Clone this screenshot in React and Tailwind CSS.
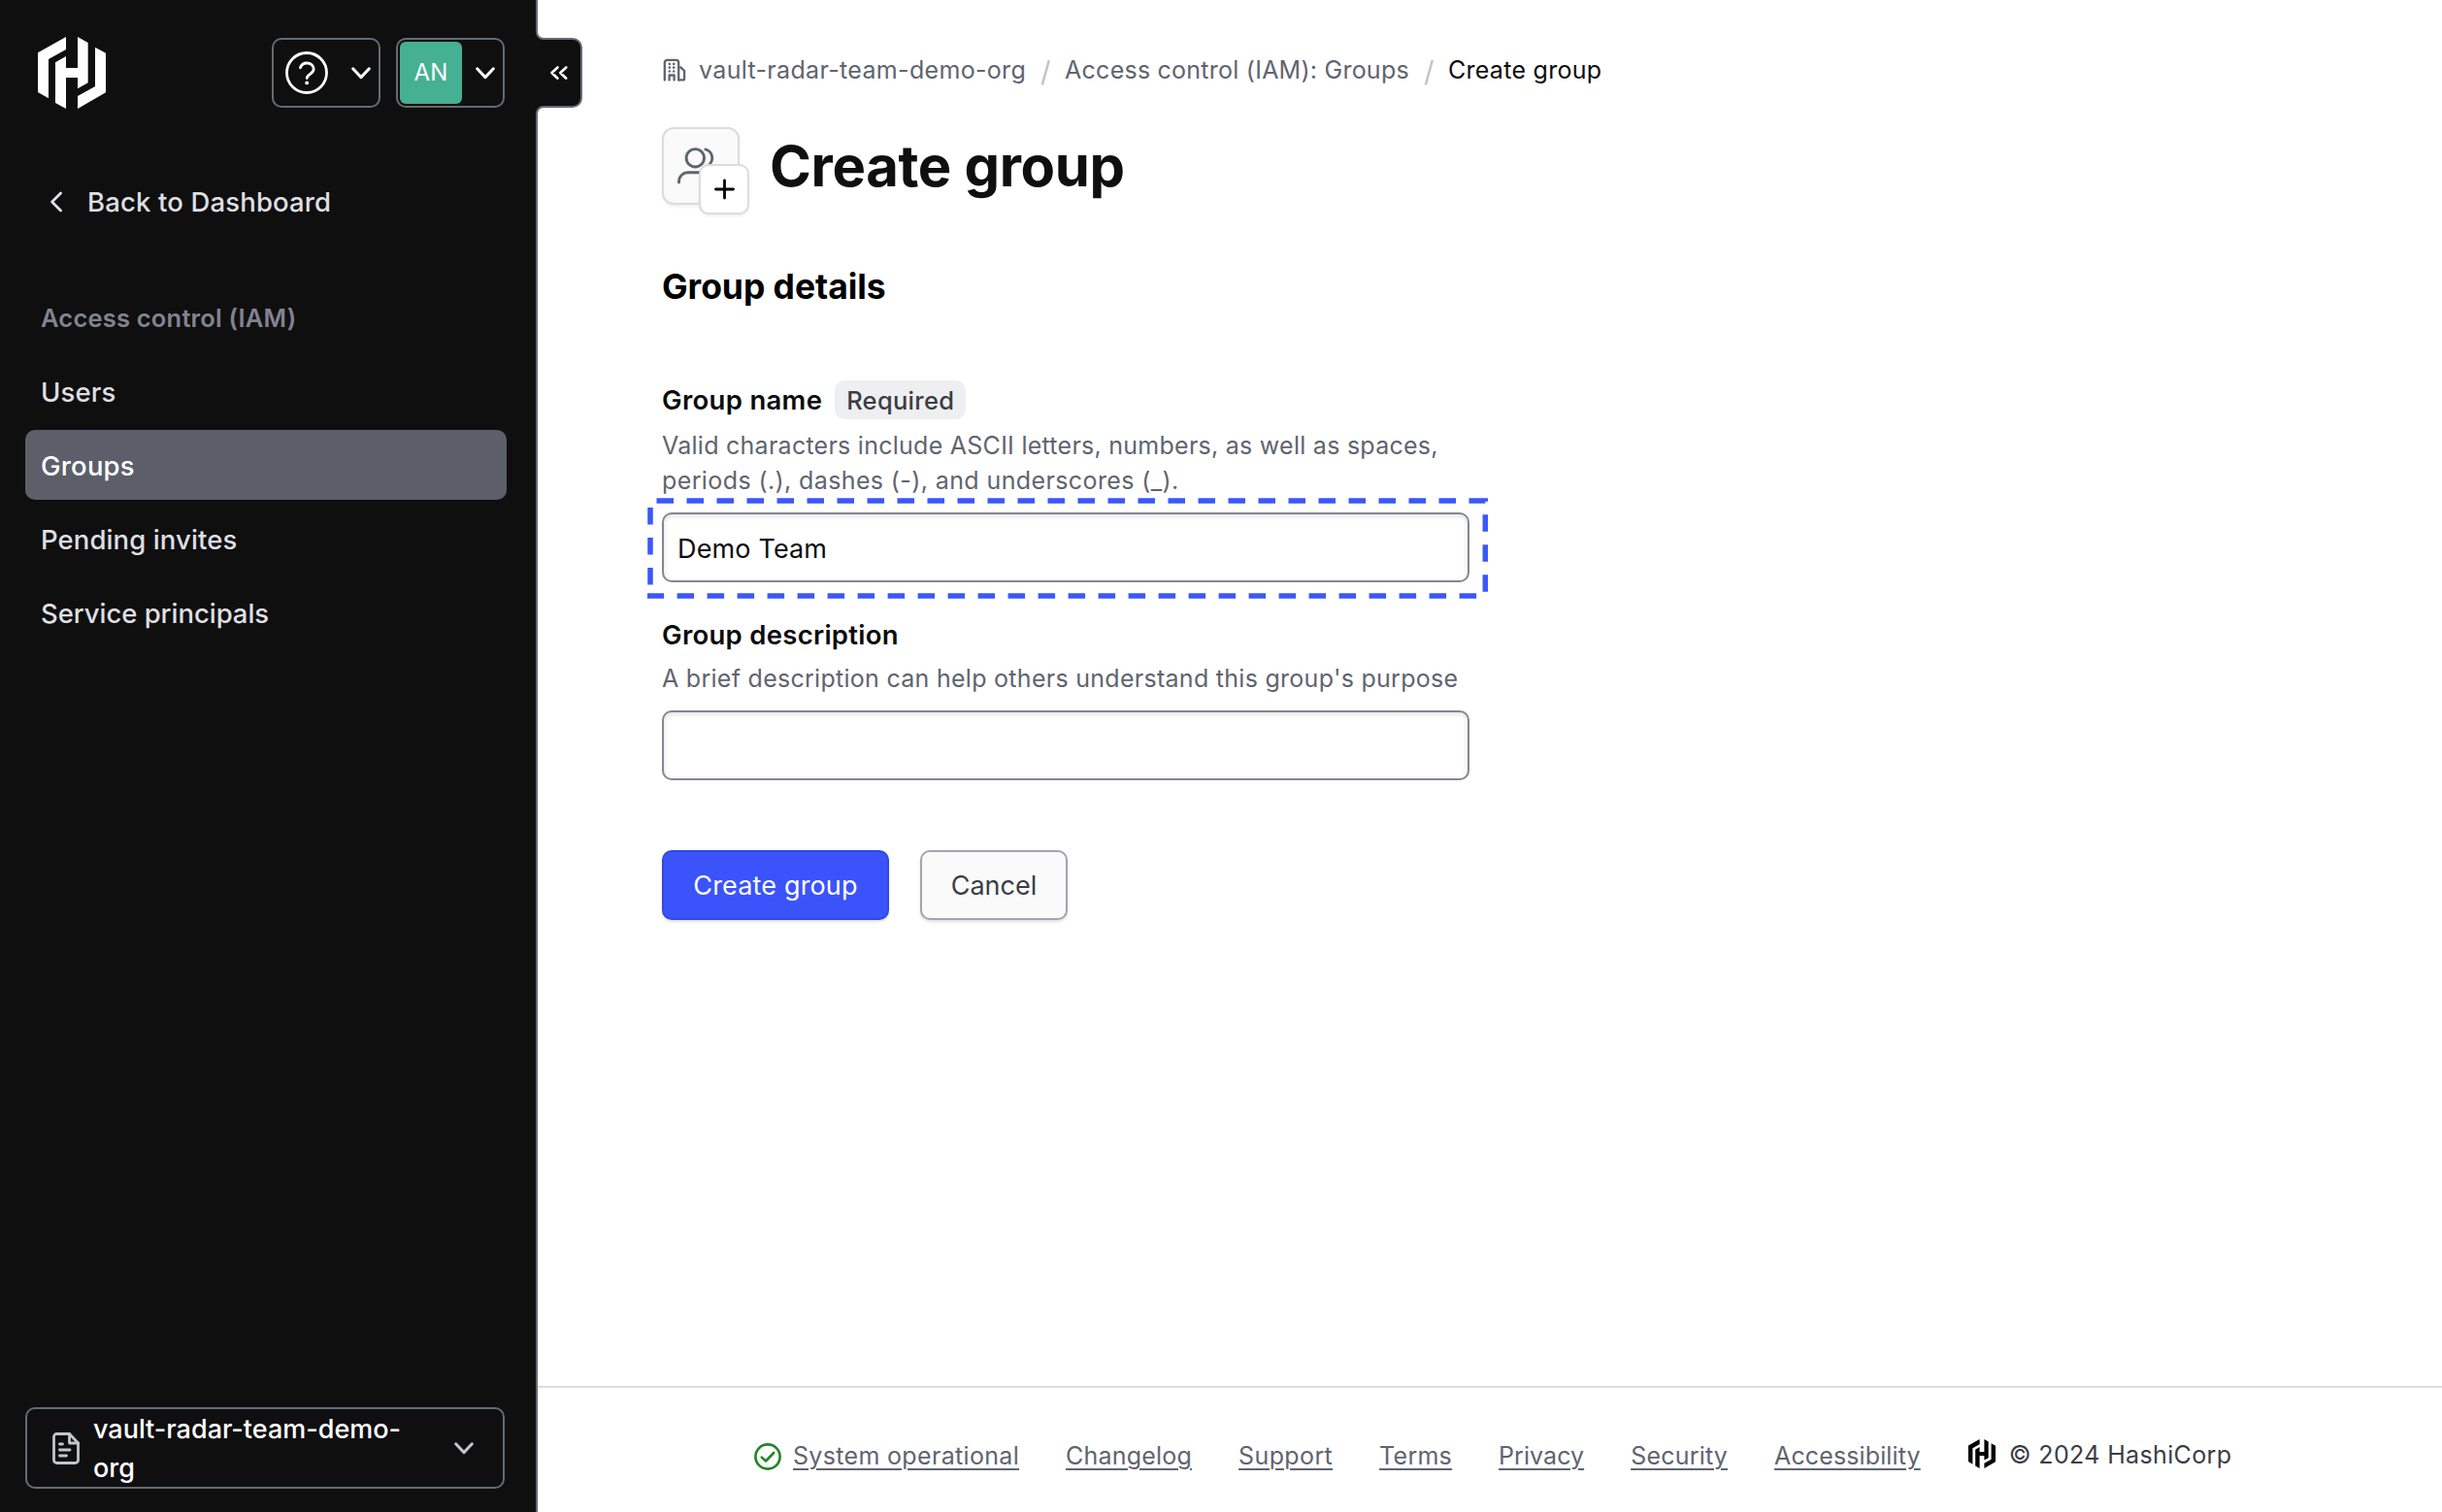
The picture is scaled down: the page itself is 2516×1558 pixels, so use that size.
import React from "react";

function HashiLogo({ className }) {
  return (
    <svg viewBox="57 39 210 222" preserveAspectRatio="none" fill="currentColor" className={className}>
      <path d="M57 88 144 39V78L90 108V229L57 210Z" />
      <path d="M111 118 144 99V135H180V39L212 57V181L180 199V165H144V261L111 243Z" />
      <path d="M234 71 267 89V211L180 261V222L234 192Z" />
    </svg>
  );
}

function Chevron({ className }) {
  return (
    <svg viewBox="0 0 20 13" fill="none" stroke="currentColor" strokeWidth="3" strokeLinecap="round" strokeLinejoin="round" className={className}>
      <path d="M1.7 1.8 10 10.6 18.3 1.8" />
    </svg>
  );
}

function HelpIcon() {
  return (
    <svg viewBox="0 0 44 44" fill="none" stroke="currentColor" strokeWidth="2.8" strokeLinecap="round" strokeLinejoin="round" className="h-11 w-11">
      <circle cx="22" cy="22" r="20.5" />
      <path d="M15.4 16.8A7 7 0 0 1 22.2 12c4 0 7 2.7 7 6.3 0 4.7-7 5.2-7 9.2" />
      <circle cx="22.2" cy="32.4" r="1.9" fill="currentColor" stroke="none" />
    </svg>
  );
}

function FileIcon() {
  return (
    <svg viewBox="0 0 28 33" fill="none" stroke="currentColor" strokeWidth="2.8" strokeLinecap="round" strokeLinejoin="round" className="h-[33px] w-[28px]">
      <path d="M17.5 1.5H4.5a3 3 0 0 0-3 3v24a3 3 0 0 0 3 3h19a3 3 0 0 0 3-3V11Z" />
      <path d="M17.5 1.5V11h9M7.500 12h3M7.500 18h10.500M7.500 24h7" />
    </svg>
  );
}

function OrgIcon() {
  return (
    <svg viewBox="0 0 24 24" fill="none" stroke="currentColor" strokeWidth="2.3" strokeLinecap="round" strokeLinejoin="round" className="h-6 w-6">
      <path d="M1.8 22.5V4.500a2.700 2.700 0 0 1 2.700-2.700h9a2.700 2.700 0 0 1 2.700 2.700v18" />
      <path d="M16.3 9.300h2l3.800 3.500v8.200a1.400 1.400 0 0 1-1.400 1.400h-4.400" />
      <path d="M6.6 22.500v-5h5v5" />
      <path d="M6.8 5.800v.1M11.200 5.800v.1M6.800 9.600v.1M11.200 9.600v.1M6.800 13.400v.1M11.200 13.400v.1" strokeWidth="2.5" />
    </svg>
  );
}

function UsersIcon() {
  return (
    <svg viewBox="0 0 48 48" fill="none" stroke="currentColor" strokeWidth="2.9" strokeLinecap="round" strokeLinejoin="round" className="h-12 w-12">
      <circle cx="18.3" cy="15.800" r="9.200" />
      <path d="M28.900 6.900a9.200 9.200 0 0 1 0 17.800" />
      <path d="M1.500 41v-1.200a9 9 0 0 1 9-9h15.500a9 9 0 0 1 9 9v1.200" />
    </svg>
  );
}

function CheckCircle() {
  return (
    <svg viewBox="0 0 28 28" fill="none" stroke="currentColor" strokeWidth="2.6" strokeLinecap="round" strokeLinejoin="round" className="h-7 w-7">
      <circle cx="14" cy="14" r="12.6" />
      <path d="M7.8 14.600 12 18.500 20.200 10" />
    </svg>
  );
}

function CollapseTab() {
  return (
    <div className="absolute top-[30px] left-[550px] z-10 h-[90px] w-[52px]">
      <svg viewBox="550 30 52 90" fill="none" className="h-full w-full">
        <path d="M550 32H553V33A7 7 0 0 0 560 40H590A9 9 0 0 1 599 49V101A9 9 0 0 1 590 110H560A7 7 0 0 0 553 117V118H550Z" fill="#0f0f0f" />
        <path d="M553 32V33A7 7 0 0 0 560 40H590A9 9 0 0 1 599 49V101A9 9 0 0 1 590 110H560A7 7 0 0 0 553 117V118" stroke="#656a76" strokeWidth="2" />
        <path d="M574.5 69.500 568.500 75 574.500 80.700M583.300 69.500 577.300 75 583.300 80.700" stroke="#fff" strokeWidth="2.6" strokeLinecap="round" strokeLinejoin="round" />
      </svg>
    </div>
  );
}

const navItems = [
  { label: "Users", tracking: "tracking-[0.15px]" },
  { label: "Groups", tracking: "tracking-[0.2px]", active: true },
  { label: "Pending invites", tracking: "tracking-[0.1px]" },
  { label: "Service principals", tracking: "tracking-[-0.05px]" },
];

function Sidebar() {
  return (
    <aside className="flex h-full w-[554px] shrink-0 flex-col border-r-2 border-[#656a76] bg-[#0f0f0f] font-medium text-[#dedfe3]">
      <div className="mt-[38px] flex h-[74px] items-center pl-[39px] text-white">
        <HashiLogo className="h-[74px] w-[70px]" />
        <button className="ml-[171px] flex h-[72px] w-[112px] items-center rounded-[10px] border-2 border-[#656a76] pl-3">
          <HelpIcon />
          <Chevron className="ml-6 h-[13px] w-5" />
        </button>
        <button className="ml-4 flex h-[72px] w-[112px] items-center rounded-[10px] border-2 border-[#656a76] pl-0.5">
          <span className="flex h-16 w-16 items-center justify-center rounded-[6px] bg-[#45b092] text-[24px] font-normal tracking-[0.2px]">AN</span>
          <Chevron className="ml-[14px] h-[13px] w-5" />
        </button>
      </div>
      <a className="mt-[60px] flex h-[72px] items-center pl-[51px] text-[27.5px] tracking-[0.15px]">
        <svg viewBox="0 0 14 22" fill="none" stroke="currentColor" strokeWidth="2.8" strokeLinecap="round" strokeLinejoin="round" className="h-[22px] w-[14px]">
          <path d="M11.6 2 2.600 11l9 9" />
        </svg>
        <span className="ml-[25px] pt-px">Back to Dashboard</span>
      </a>
      <h2 className="mt-[66px] pl-[42px] text-[25.5px] leading-9 font-semibold tracking-[0.2px] text-[#82838f]">Access control (IAM)</h2>
      <nav className="mt-[21px] flex flex-col gap-1 pr-[30px] pl-[26px] text-[27.5px]">
        {navItems.map((item) => (
          <a
            key={item.label}
            className={`flex h-[72px] items-center rounded-[10px] pt-[3px] pl-4 ${item.tracking} ${item.active ? "bg-[#5c5f6a] text-white" : ""}`}
          >
            {item.label}
          </a>
        ))}
      </nav>
      <button className="mt-auto mb-[24px] ml-[26px] flex h-[84px] w-[494px] items-center rounded-[10px] border-2 border-[#656a76] pl-[26px] text-left text-[#c2c5cb]">
        <FileIcon />
        <span className="ml-[14px] w-[340px] pt-0.5 text-[27px] leading-10 tracking-[0px] text-white">vault-radar-team-demo-org</span>
        <Chevron className="ml-[32px] h-[13px] w-5" />
      </button>
    </aside>
  );
}

function Slash() {
  return (
    <svg viewBox="0 0 40 36" fill="none" className="h-9 w-[40px]">
      <path d="M23.8 7 16.800 32.500" stroke="#c2c5cb" strokeWidth="2.6" />
    </svg>
  );
}

function TextInput({ value, label }) {
  return (
    <input
      readOnly
      aria-label={label}
      value={value}
      className="block h-[72px] w-[832px] rounded-[10px] border-2 border-[#858692] bg-white pt-0.5 pl-[14px] text-[27px] tracking-[0.15px] text-[#0c0c0e] shadow-[inset_0_2px_5px_rgba(101,106,118,0.2)] outline-none"
    />
  );
}

const footerLinks = [
  { label: "System operational", tracking: "tracking-[0.33px]" },
  { label: "Changelog", tracking: "tracking-[0.21px]" },
  { label: "Support", tracking: "tracking-[0.37px]" },
  { label: "Terms", tracking: "tracking-[0.26px]" },
  { label: "Privacy", tracking: "tracking-[0.06px]" },
  { label: "Security", tracking: "tracking-[0.21px]" },
  { label: "Accessibility", tracking: "tracking-[0.12px]" },
];

function Footer() {
  return (
    <footer className="flex h-[130px] items-start border-t-2 border-[#dcdbe2] pt-[52px] pl-[223px] text-[25px] leading-9 text-[#5f646f]">
      <span className="mt-[5px] mr-3 text-[#258327]">
        <CheckCircle />
      </span>
      <div className="flex gap-12">
        {footerLinks.map((link) => (
          <a key={link.label} className={`underline decoration-2 underline-offset-[4px] ${link.tracking}`}>
            {link.label}
          </a>
        ))}
      </div>
      <HashiLogo className="mt-px ml-[49px] h-[30px] w-[28px] text-black" />
      <span className="-mt-px ml-[14px] tracking-[0.36px] text-[#3b3d45]">© 2024 HashiCorp</span>
    </footer>
  );
}

export default function App() {
  return (
    <div className="relative flex h-[1558px] w-[2516px] overflow-hidden bg-white font-['Inter',sans-serif]">
      <Sidebar />
      <CollapseTab />
      <div className="flex flex-1 flex-col">
        <main className="flex-1 pt-[55px] pl-[128px]">
          <div className="flex h-9 items-center text-[25px] text-[#5f646f]">
            <span className="-mt-0.5 ml-[1px]">
              <OrgIcon />
            </span>
            <span className="ml-[13px] tracking-[0.33px]">vault-radar-team-demo-org</span>
            <Slash />
            <span className="tracking-[0.24px]">Access control (IAM): Groups</span>
            <Slash />
            <span className="tracking-[0.29px] text-[#0c0c0e]">Create group</span>
          </div>

          <div className="mt-[40px] flex">
            <div className="relative h-20 w-20 rounded-[12px] border-2 border-[#dcdce0] bg-[#fafafa] text-[#5f646f] shadow-[0_2px_3px_rgba(101,106,118,0.1)]">
              <div className="flex h-full w-full items-center justify-center">
                <UsersIcon />
              </div>
              <div className="absolute top-[36px] left-[36px] flex h-[52px] w-[52px] items-center justify-center rounded-[10px] border-2 border-[#dcdce0] bg-white text-black shadow-[0_2px_3px_rgba(101,106,118,0.1)]">
                <svg viewBox="0 0 22 22" fill="none" stroke="currentColor" strokeWidth="2.8" strokeLinecap="round" className="h-[22px] w-[22px]">
                  <path d="M11.5 2v18M2.500 11h18" />
                </svg>
              </div>
            </div>
            <h1 className="ml-[31px] text-[58px] leading-[81px] font-bold tracking-[-0.35px] text-[#0f0f0f]">Create group</h1>
          </div>

          <h2 className="mt-[60px] text-[35.5px] leading-[48px] font-bold tracking-[-0.05px] text-black">Group details</h2>

          <div className="mt-[72px] flex h-10 items-center">
            <label className="pt-px text-[27.5px] font-semibold tracking-[0.3px] text-[#0c0c0e]">Group name</label>
            <span className="ml-[13px] flex h-10 w-[135px] items-center justify-center rounded-[10px] bg-[#eeeff1] pt-0.5 text-[25.5px] font-medium tracking-[0.3px] text-[#3b3d45]">Required</span>
          </div>
          <p className="mt-[9px] mb-[15px] text-[25px] leading-9 tracking-[0.26px] text-[#5f646f]">
            Valid characters include ASCII letters, numbers, as well as spaces,
            <br />
            <span className="tracking-[0.39px]">periods (.), dashes (-), and underscores (_).</span>
          </p>
          <div className="relative w-[832px]">
            <TextInput label="Group name" value="Demo Team" />
            <svg viewBox="662 508 876 114" fill="none" className="pointer-events-none absolute -top-[20px] -left-[20px] h-[114px] w-[876px]">
              <path d="M670 602.5V516H1530.300V614H667" stroke="#3b57fb" strokeWidth="5.5" strokeDasharray="17.5 13.5" />
            </svg>
          </div>

          <label className="mt-[36px] block text-[27.5px] leading-9 font-semibold tracking-[0.28px] text-[#0c0c0e]">Group description</label>
          <p className="mt-[9px] mb-[15px] text-[25px] leading-9 tracking-[0.28px] text-[#5f646f]">
            A brief description can help others understand this group's purpose
          </p>
          <TextInput label="Group description" value="" />

          <div className="mt-[72px] flex gap-8 text-[27px]">
            <button className="h-[72px] w-[234px] rounded-[10px] border-2 border-[#3049e0] bg-[#3a53fb] pt-[3px] text-center tracking-[0.15px] text-white shadow-[0_2px_3px_rgba(101,106,118,0.2)]">Create group</button>
            <button className="h-[72px] w-[152px] rounded-[10px] border-2 border-[#a4a4aa] bg-[#fafafa] pt-[3px] text-center text-[#3b3d45] shadow-[0_2px_3px_rgba(101,106,118,0.2)]">Cancel</button>
          </div>
        </main>
        <Footer />
      </div>
    </div>
  );
}
